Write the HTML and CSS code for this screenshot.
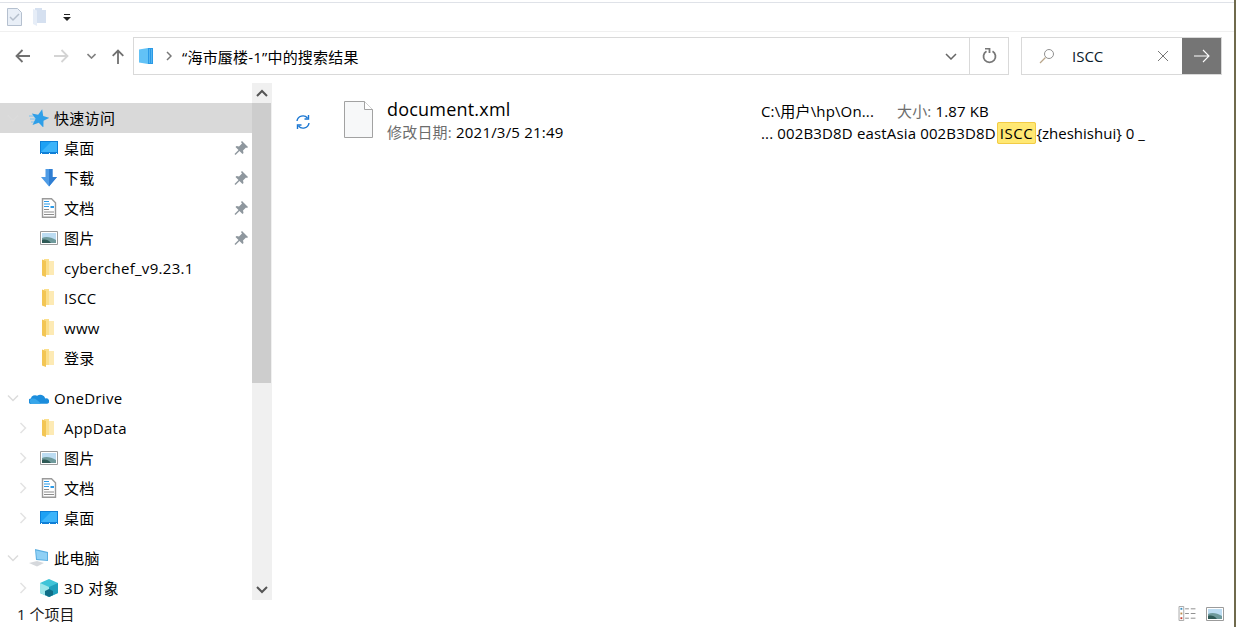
FILE: index.html
```html
<!DOCTYPE html>
<html lang="zh-CN">
<head>
  <meta charset="UTF-8" />
  <title>海市蜃楼-1 搜索结果</title>
  <link rel="stylesheet" href="styles.css">
</head>
<body>

  <svg class="defs" width="0" height="0" aria-hidden="true">
    <symbol id="folder" viewBox="0 0 12 18">
      <path d="M2 0h5v2h5v14H2z" fill="#fbdf8c"/>
      <path d="M7 2h5v14H7z" fill="#fdeab4"/>
      <path d="M0 .500l4 1.500v16l-4-1.500z" fill="#f3c654"/>
    </symbol>
    <symbol id="desktop" viewBox="0 0 18 13">
      <path d="M0 0h18v13H0z" fill="#0f7fd6"/>
      <path d="M1 1h16v10H1z" fill="#1ea1f4"/>
      <path d="M1 11L11 1h6v10z" fill="#3db4fa"/>
      <path d="M1 12h1v1H1zM9 12h1v1H9zM16 12h1v1h-1z" fill="#fff"/>
    </symbol>
    <symbol id="download" viewBox="0 0 18 18">
      <path d="M5.500 0h7v8H17l-8 9.500L1 8h4.500z" fill="#4f9ce6"/>
      <path d="M9 0h3.500v8H17l-8 9.500z" fill="#2f7ed2"/>
    </symbol>
    <symbol id="doc" viewBox="0 0 16 20">
      <path d="M1.500 .700h9l4 4v14.600h-13z" fill="#fff" stroke="#9a9a9a" stroke-width="1.400"/>
      <path d="M3 3h5v1H3zM3 5.500h6v1H3zM3 8h5v1H3zM9.500 8h3.500v2H9.500z" fill="#2d9be8"/>
      <path d="M3 11h5v1H3zM3 13.500h10v1H3zM3 16h10v1H3z" fill="#8d8d8d"/>
    </symbol>
    <symbol id="picture" viewBox="0 0 18 14">
      <path d="M.500.500h17v13H.500z" fill="#fff" stroke="#9b9b9b"/>
      <path d="M2 2h14v10H2z" fill="#bcdcf2"/>
      <path d="M2 7c4-2 9-1 14 2v3H2z" fill="#6f9a9c"/>
      <path d="M2 9c3-1 6-.500 9 3H2z" fill="#2f5a56"/>
    </symbol>
    <symbol id="pin" viewBox="0 0 14 14">
      <path d="M8 0l6 6-1 1-1-.500-3 3 .500 2.500-1 1-3-3-4 4-1-1 4-4-3-3 1-1 2.500.500 3-3L7 1z" fill="#8e979e"/>
    </symbol>
    <symbol id="chev-r" viewBox="0 0 8 12">
      <path d="M1.500 1L6.500 6l-5 5" fill="none" stroke="#e3e3e3" stroke-width="1.500"/>
    </symbol>
    <symbol id="chev-d" viewBox="0 0 12 8">
      <path d="M1 1.500L6 6.500l5-5" fill="none" stroke="#dcdcdc" stroke-width="1.500"/>
    </symbol>
  </svg>

  <div class="window">
    <div class="quickbar">
      <svg class="qa-icon" width="15" height="18" viewBox="0 0 15 18">
        <path d="M.500.500h10l4 4v13H.500z" fill="#e9eff7" stroke="#b5c0cf"/>
        <path d="M3 9l3 3 6-6" fill="none" stroke="#b5bfcc" stroke-width="1.500"/>
      </svg>
      <svg class="qa-icon qa-folder" width="13" height="18" viewBox="0 0 13 18">
        <path d="M2 0h7v2h4v13H2z" fill="#d5e0f0"/>
        <path d="M0 1l4 1.500V18l-4-2z" fill="#e6edf7"/>
      </svg>
      <svg class="qa-drop" width="8" height="7" viewBox="0 0 8 7">
        <path d="M1 0h6v1H1zM0 3h8L4 7z" fill="#222"/>
      </svg>
    </div>

    <div class="navbar">
      <div class="nav-buttons">
        <svg class="nav-back" width="15" height="14" viewBox="0 0 15 14"><path d="M15 7H1.500M7.500 1l-6 6 6 6" fill="none" stroke="#707070" stroke-width="1.800"/></svg>
        <svg class="nav-forward" width="15" height="14" viewBox="0 0 15 14"><path d="M0 7h13.500M7.500 1l6 6-6 6" fill="none" stroke="#d4d4d4" stroke-width="1.800"/></svg>
        <svg class="nav-drop" width="9" height="6" viewBox="0 0 9 6"><path d="M.500 1l4 4 4-4" fill="none" stroke="#808080" stroke-width="1.600"/></svg>
        <svg class="nav-up" width="12" height="15" viewBox="0 0 12 15"><path d="M6 15V1.500M.700 6.800l5.300-5.300 5.300 5.300" fill="none" stroke="#707070" stroke-width="1.800"/></svg>
      </div>

      <div class="address">
        <svg class="addr-icon" width="14" height="16" viewBox="0 0 14 16">
          <path d="M0 1.500L9 0v16l-9-1.500z" fill="#62c2f6"/>
          <path d="M9 0h5v16H9z" fill="#2a9ae6"/>
          <path d="M10 1h1v14h-1zM12 1h1v14h-1z" fill="#55b5f0"/>
        </svg>
        <svg class="addr-sep" width="6" height="10" viewBox="0 0 6 10"><path d="M1 1l4 4-4 4" fill="none" stroke="#777" stroke-width="1.500"/></svg>
        <span class="addr-text">“海市蜃楼-1”中的搜索结果</span>
        <svg class="addr-drop" width="12" height="7" viewBox="0 0 12 7"><path d="M1 1l5 5 5-5" fill="none" stroke="#666" stroke-width="1.500"/></svg>
        <div class="addr-refresh">
          <svg width="15" height="16" viewBox="0 0 15 16"><path d="M4.500 3.200a6 6 0 1 0 6 0" fill="none" stroke="#777" stroke-width="1.800"/><path d="M3 .500h4.500v4.500" fill="none" stroke="#777" stroke-width="1.800"/></svg>
        </div>
      </div>

      <div class="search">
        <svg class="search-icon" width="16" height="16" viewBox="0 0 16 16">
          <circle cx="10" cy="6" r="4.500" fill="none" stroke="#909090"/>
          <path d="M6.500 9.500L1 15" stroke="#b9a58a" stroke-width="1.200"/>
        </svg>
        <span class="search-text">ISCC</span>
        <svg class="search-clear" width="12" height="12" viewBox="0 0 12 12"><path d="M1 1l10 10M11 1L1 11" stroke="#777" stroke-width="1"/></svg>
        <div class="search-go">
          <svg width="16" height="14" viewBox="0 0 16 14"><path d="M0 7h15M9 1l6 6-6 6" fill="none" stroke="#fff" stroke-width="1.100"/></svg>
        </div>
      </div>
    </div>

    <div class="content">
      <nav class="tree">
        <div class="tree-rows">
          <div class="row row-top selected">
            <svg class="twist" width="12" height="8"><use href="#chev-d"/></svg>
            <svg class="top-icon" width="20" height="18" viewBox="0 0 20 18">
              <path d="M0 7h6M1 10h5M2 13h4" stroke="#7fc2ee"/>
              <path transform="rotate(14 11 9)" d="M11 0l2.600 6.200 6.400.500-4.900 4.200 1.500 6.600L11 14l-5.600 3.500 1.500-6.600L2 6.700l6.400-.500z" fill="#2f9fe8"/>
            </svg>
            <span>快速访问</span>
          </div>
          <div class="row"><svg class="icon" width="18" height="13"><use href="#desktop"/></svg><span>桌面</span><svg class="pin" width="14" height="14"><use href="#pin"/></svg></div>
          <div class="row"><svg class="icon" width="18" height="18"><use href="#download"/></svg><span>下载</span><svg class="pin" width="14" height="14"><use href="#pin"/></svg></div>
          <div class="row"><svg class="icon" width="16" height="20"><use href="#doc"/></svg><span>文档</span><svg class="pin" width="14" height="14"><use href="#pin"/></svg></div>
          <div class="row"><svg class="icon" width="18" height="14"><use href="#picture"/></svg><span>图片</span><svg class="pin" width="14" height="14"><use href="#pin"/></svg></div>
          <div class="row"><svg class="icon icon-folder" width="12" height="18"><use href="#folder"/></svg><span>cyberchef_v9.23.1</span></div>
          <div class="row"><svg class="icon icon-folder" width="12" height="18"><use href="#folder"/></svg><span>ISCC</span></div>
          <div class="row"><svg class="icon icon-folder" width="12" height="18"><use href="#folder"/></svg><span>www</span></div>
          <div class="row"><svg class="icon icon-folder" width="12" height="18"><use href="#folder"/></svg><span>登录</span></div>

          <div class="row row-top">
            <svg class="twist" width="12" height="8"><use href="#chev-d"/></svg>
            <svg class="top-icon" width="20" height="13" viewBox="0 0 22 14">
              <path d="M3 14a3 3 0 0 1-1-6 5 5 0 0 1 7-3 6 6 0 0 1 9 3 3 3 0 0 1 2 6z" fill="#1c8ddc"/>
              <path d="M3 14a3 3 0 0 1-.500-5.500C6 7 9 9 13 14z" fill="#36a6ea"/>
            </svg>
            <span>OneDrive</span>
          </div>
          <div class="row"><svg class="twist-r" width="8" height="12"><use href="#chev-r"/></svg><svg class="icon icon-folder" width="12" height="18"><use href="#folder"/></svg><span>AppData</span></div>
          <div class="row"><svg class="twist-r" width="8" height="12"><use href="#chev-r"/></svg><svg class="icon" width="18" height="14"><use href="#picture"/></svg><span>图片</span></div>
          <div class="row"><svg class="twist-r" width="8" height="12"><use href="#chev-r"/></svg><svg class="icon" width="16" height="20"><use href="#doc"/></svg><span>文档</span></div>
          <div class="row"><svg class="twist-r" width="8" height="12"><use href="#chev-r"/></svg><svg class="icon" width="18" height="13"><use href="#desktop"/></svg><span>桌面</span></div>

          <div class="row row-top">
            <svg class="twist" width="12" height="8"><use href="#chev-d"/></svg>
            <svg class="top-icon" width="20" height="18" viewBox="0 0 20 18">
              <path d="M6 0l13 3v9L7 11z" fill="#5aaee0"/>
              <path d="M7 1.500l11 2.500v7l-10-1z" fill="#8fd0f5"/>
              <path d="M0 14l8-2 7 2-7 3.500z" fill="#d5d8dc"/>
            </svg>
            <span>此电脑</span>
          </div>
          <div class="row"><svg class="twist-r" width="8" height="12"><use href="#chev-r"/></svg>
            <svg class="icon" width="18" height="18" viewBox="0 0 18 18">
              <path d="M9 0l9 4v10l-9 4-9-4V4z" fill="#3fc4d8"/>
              <path d="M0 4l9 4v10l-9-4z" fill="#9ce6ea"/>
              <path d="M9 8l9-4v10l-9 4z" fill="#1f9fbc"/>
              <path d="M5 12l4-2 4 2v4l-4 2-4-2z" fill="#0f6e88"/>
            </svg>
            <span>3D 对象</span>
          </div>
        </div>

        <div class="scrollbar">
          <div class="scroll-btn">
            <svg width="12" height="8" viewBox="0 0 12 8"><path d="M1 7l5-5 5 5" fill="none" stroke="#555" stroke-width="2"/></svg>
          </div>
          <div class="scroll-track"><div class="scroll-thumb"></div></div>
          <div class="scroll-btn">
            <svg width="12" height="8" viewBox="0 0 12 8"><path d="M1 1l5 5 5-5" fill="none" stroke="#555" stroke-width="2"/></svg>
          </div>
        </div>
      </nav>

      <main class="results">
        <div class="result">
          <svg class="sync" width="14" height="14" viewBox="0 0 14 14">
            <path d="M1 6a6 6 0 0 1 10.500-3M13 8a6 6 0 0 1-10.500 3" fill="none" stroke="#1976d2" stroke-width="1.400"/>
            <path d="M12.500 0v4h-4M1.500 14v-4h4" fill="none" stroke="#1976d2" stroke-width="1.400"/>
          </svg>
          <svg class="file-icon" width="29" height="37" viewBox="0 0 29 37">
            <path d="M.500.500h20l8 8v28H.500z" fill="#f7f8f9" stroke="#a2a2a2"/>
            <path d="M20.500.500v8h8" fill="#fff" stroke="#a2a2a2"/>
          </svg>
          <div class="file-main">
            <div class="file-name">document.xml</div>
            <div class="file-meta"><span class="label">修改日期:</span> 2021/3/5 21:49</div>
          </div>
          <div class="file-detail">
            <div class="detail-top"><span class="path">C:\用户\hp\On...</span><span><span class="label">大小:</span> 1.87 KB</span></div>
            <div class="snippet">... 002B3D8D eastAsia 002B3D8D<mark class="hit">ISCC</mark><span class="snippet-tail">{zheshishui} 0 _</span></div>
          </div>
        </div>
      </main>
    </div>

    <footer class="status">
      <span class="count">1 个项目</span>
      <div class="view-buttons">
        <svg width="18" height="15" viewBox="0 0 18 16">
          <path d="M.500.500h5v15h-5z" fill="#fff" stroke="#a5a5a5"/>
          <path d="M2 2h2v2H2z" fill="#3a8fc0"/><path d="M2 7h2v2H2z" fill="#b98a4a"/><path d="M2 12h2v2H2z" fill="#c8402f"/>
          <path d="M7 3h4M13 3h5M7 8h4M13 8h5M7 13h4M13 13h5" stroke="#8a8a8a"/>
        </svg>
        <svg width="18" height="14"><use href="#picture"/></svg>
      </div>
    </footer>
  </div>

</body>
</html>
```
FILE: styles.css
```css
* {
  box-sizing: border-box;
}

html, body {
  height: 100%;
}

body {
  margin: 0;
  background: #fff;
  color: #000;
  font-family: "Open Sans", "Noto Sans CJK SC", sans-serif;
  font-size: 15px;
  overflow: hidden;
}

.defs {
  display: none;
}

svg {
  display: block;
  flex: none;
}

.window {
  height: 100%;
  display: flex;
  flex-direction: column;
  padding-top: 2px;
  border-right: 2px solid #6f6a4c;
}

.quickbar {
  height: 30px;
  flex: none;
  display: flex;
  align-items: center;
  padding-left: 7px;
  border-top: 1px solid #dfe2e8;
  border-bottom: 1px solid #f0f0f0;
}

.qa-folder {
  margin-left: 11px;
}

.qa-drop {
  margin-left: 17px;
}

.navbar {
  height: 51px;
  flex: none;
  display: flex;
  padding: 5px 12px 8px 0;
}

.nav-buttons {
  width: 133px;
  flex: none;
  display: flex;
  align-items: center;
  padding-left: 15px;
}

.nav-forward {
  margin-left: 24px;
}

.nav-drop {
  margin-left: 18px;
}

.nav-up {
  margin-left: 16px;
}

.address {
  width: 876px;
  flex: none;
  display: flex;
  align-items: center;
  border: 1px solid #d9d9d9;
  padding-left: 5px;
}

.addr-sep {
  margin-left: 13px;
}

.addr-text {
  margin-left: 10px;
  flex: 1;
  letter-spacing: .2px;
}

.addr-drop {
  margin-right: 12px;
}

.addr-refresh {
  width: 39px;
  height: 100%;
  display: flex;
  align-items: center;
  justify-content: center;
  border-left: 1px solid #d9d9d9;
}

.search {
  width: 201px;
  flex: none;
  margin-left: 12px;
  display: flex;
  align-items: center;
  border: 1px solid #d9d9d9;
  padding-left: 17px;
}

.search-text {
  margin-left: 17px;
  flex: 1;
  color: #0a1a2a;
}

.search-clear {
  margin-right: 13px;
}

.search-go {
  width: 39px;
  height: 100%;
  display: flex;
  align-items: center;
  justify-content: center;
  background: #757575;
}

.content {
  flex: 1;
  min-height: 0;
  display: flex;
}

.tree {
  width: 272px;
  flex: none;
  display: flex;
  border-right: 1px solid #f0f0f0;
}

.tree-rows {
  flex: 1;
  min-width: 0;
  overflow: hidden;
  padding-top: 20px;
  letter-spacing: .3px;
}

.row {
  height: 30px;
  position: relative;
  display: flex;
  align-items: center;
  padding-left: 64px;
  padding-bottom: 1px;
  white-space: nowrap;
}

.row.row-top {
  padding-left: 54px;
}

.row-top.selected {
  background: #d9d9d9;
}

.tree-rows .row-top:not(.selected) {
  margin-top: 10px;
}

.icon, .top-icon, .twist, .twist-r {
  position: absolute;
}

.icon {
  left: 49px;
  transform: translateX(-50%);
}

.icon-folder {
  left: 48px;
}

.top-icon {
  left: 29px;
}

.twist {
  left: 7px;
}

.twist-r {
  left: 19px;
}

.pin {
  position: absolute;
  right: 4px;
}

.scrollbar {
  width: 19px;
  flex: none;
  display: flex;
  flex-direction: column;
  background: #f0f0f0;
}

.scroll-btn {
  height: 20px;
  flex: none;
  display: flex;
  align-items: center;
  justify-content: center;
}

.scroll-track {
  flex: 1;
}

.scroll-thumb {
  height: 280px;
  background: #cdcdcd;
}

.results {
  flex: 1;
  min-width: 0;
  padding-top: 17px;
}

.result {
  display: flex;
  align-items: flex-start;
}

.sync {
  margin: 15px 0 0 24px;
}

.file-icon {
  margin: 1px 0 0 34px;
}

.file-main {
  width: 374px;
  margin-left: 14px;
  margin-top: -3px;
  flex: none;
  letter-spacing: .2px;
}

.file-name {
  font-size: 18px;
  line-height: 24px;
}

.file-meta {
  line-height: 22px;
}

.label {
  color: #6d6d6d;
}

.file-detail {
  line-height: 22px;
  letter-spacing: .15px;
}

.detail-top {
  display: flex;
}

.path {
  width: 136px;
}

.hit {
  background: #ffe873;
  border: 1px solid #f2cb45;
  border-radius: 2px;
  color: inherit;
  margin-left: 1px;
  padding: 0 2px 0 2px;
  letter-spacing: .6px;
}

.snippet-tail {
  letter-spacing: 0;
}

.status {
  height: 27px;
  flex: none;
  display: flex;
  align-items: center;
  justify-content: space-between;
  padding: 0 10px 0 17px;
  color: #1a1a1a;
}

.view-buttons {
  display: flex;
  align-items: center;
  gap: 10px;
}
```
